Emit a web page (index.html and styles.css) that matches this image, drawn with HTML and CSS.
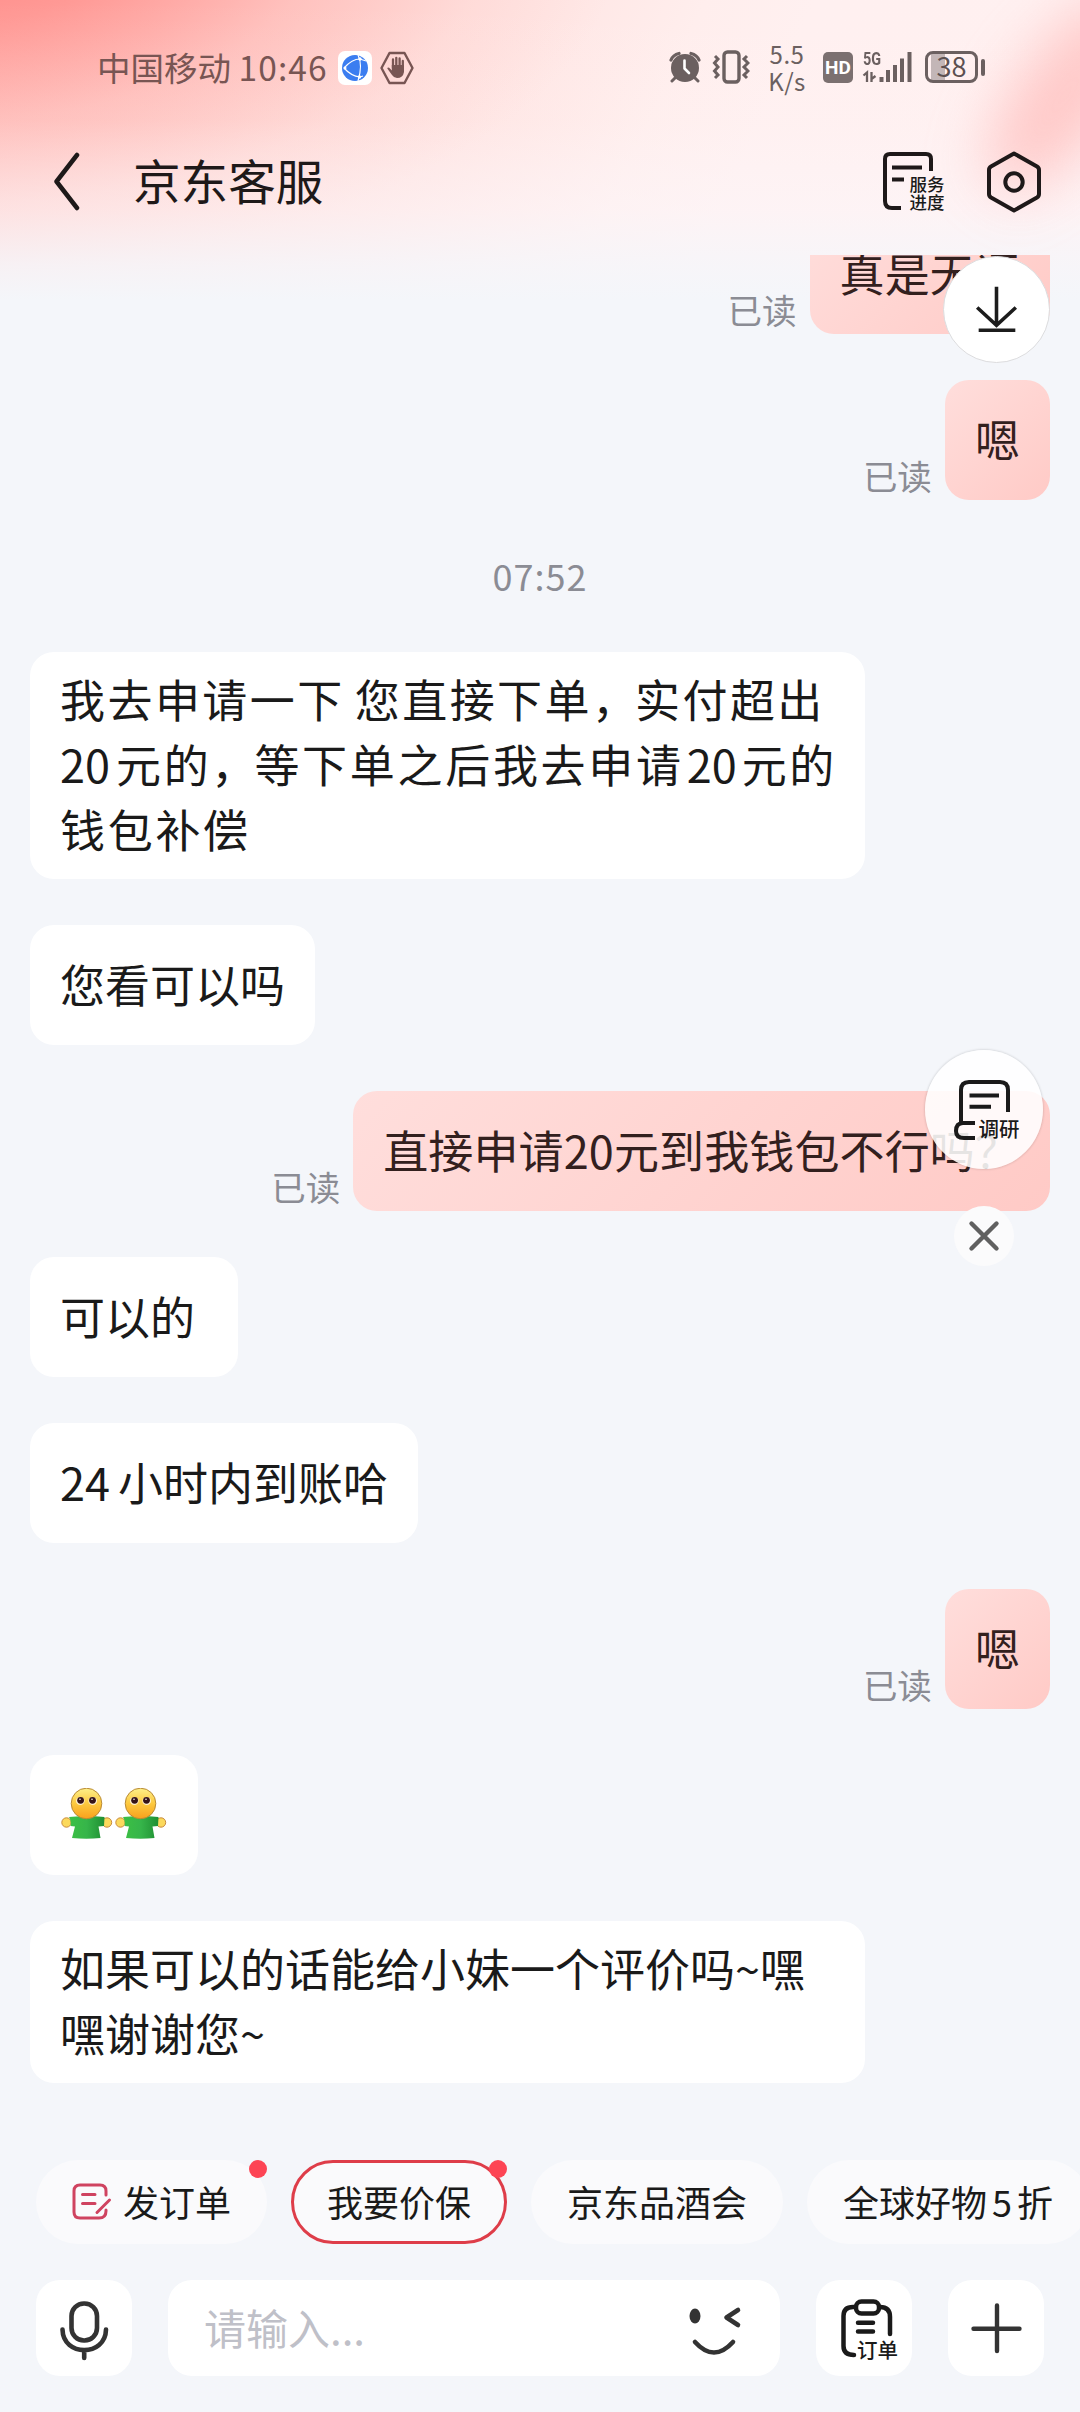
FILE: index.html
```html
<!DOCTYPE html>
<html lang="zh-CN">
<head>
<meta charset="utf-8">
<title>京东客服</title>
<link rel="stylesheet" href="styles.css">
</head>
<body>
<svg class="defs" width="0" height="0">
  <defs>
    <linearGradient id="face" x1="0" y1="0" x2="0" y2="1"><stop offset="0" stop-color="#fdf08a"/><stop offset=".5" stop-color="#fdc93f"/><stop offset="1" stop-color="#f8a01c"/></linearGradient>
    <linearGradient id="shirt" x1="0" y1="0" x2="1" y2="0"><stop offset="0" stop-color="#3cc044"/><stop offset=".5" stop-color="#36b54a"/><stop offset="1" stop-color="#1f8f33"/></linearGradient>
    <symbol id="hug" viewBox="0 0 54 54">
      <circle cx="5.500" cy="34.500" r="4.700" fill="#fbd95c" stroke="#c98a3c"/>
      <circle cx="46" cy="34.500" r="4.700" fill="#fbd95c" stroke="#c98a3c"/>
      <path d="M8 29 L22 28 H31 L43.500 29 L43 38 L37.500 38.500 L39.500 50 Q25.500 51.500 11 50 L14 38.500 L9.500 38 Q10.500 33 8 29 Z" fill="url(#shirt)"/>
      <circle cx="25.500" cy="15.500" r="15.300" fill="url(#face)" stroke="#b98a35"/>
      <ellipse cx="19.300" cy="13" rx="4.300" ry="4" fill="#fff1d0"/><ellipse cx="31.700" cy="13" rx="4.300" ry="4" fill="#fff1d0"/>
      <circle cx="19.600" cy="12.300" r="3.400" fill="#361418"/><circle cx="31.500" cy="12.300" r="3.400" fill="#361418"/>
      <circle cx="19" cy="11.200" r=".8" fill="#fff"/><circle cx="31" cy="11.200" r=".8" fill="#fff"/>
    </symbol>
  </defs>
</svg>
<div class="screen">
  <header class="header">
    <div class="status">
      <div class="status-left">
        <span class="carrier">中国移动 <span class="clock">10:46</span></span>
        <svg class="browser" width="34" height="34" viewBox="0 0 34 34"><rect width="34" height="34" rx="7" fill="#fff"/><circle cx="17" cy="17" r="13" fill="#3b7df0"/><g fill="none" stroke="#fff" stroke-width="1.200"><path d="M6 17 Q14 8 22 8 L28 10 M6 17 Q13 25 22 26 L25 25 M20 4 Q25 14 20 30"/></g><circle cx="7" cy="17" r="1.500" fill="#fff"/><circle cx="22" cy="8" r="1.700" fill="#fff"/><circle cx="21.500" cy="26" r="1.700" fill="#fff"/></svg>
        <svg width="34" height="34" viewBox="0 0 34 34"><path d="M9.500 2 H24.500 L32.500 17 L24.500 32 H9.500 L1.500 17 Z" fill="none" stroke="#785553" stroke-width="2.400" stroke-linejoin="round"/><path d="M13 17 V8.500 M16.300 16 V6.800 M19.600 16 V7.500 M22.800 17 V10" stroke="#785553" stroke-width="2.300" stroke-linecap="round"/><path d="M11.800 14 H24 V21 Q23 27 17 27 Q14 27 12 24 L7.300 17.500 Q7.500 16 9.200 16.800 L11.800 19.500 Z" fill="#785553"/></svg>
      </div>
      <div class="status-right">
        <svg width="32" height="32" viewBox="0 0 32 32"><g fill="none" stroke="#6b6060" stroke-linecap="round"><path d="M2 9 Q4 4 10 2.500 M30 9 Q28 4 22 2.500" stroke-width="3.200"/><path d="M6 27 L3 30 M26 27 L29 30" stroke-width="3"/></g><circle cx="16" cy="17" r="14" fill="#6b6060"/><path d="M15.500 9.500 V17.500 L20 22" fill="none" stroke="#fff" stroke-width="2.600" stroke-linecap="round" stroke-linejoin="round"/></svg>
        <svg class="vibrate" width="38" height="34" viewBox="0 0 38 34"><rect x="12" y="2" width="15" height="30" rx="3.500" fill="none" stroke="#6b6060" stroke-width="3.400"/><path d="M3 6 L6 9 L2.500 13 L6 17 L2.500 21 L6 25 L3 28 M35 6 L32 9 L36 13 L32 17 L36 21 L32 25 L35 28" fill="none" stroke="#6b6060" stroke-width="3"/></svg>
        <div class="speed"><span>5.5</span><span>K/s</span></div>
        <div class="hd">HD</div>
        <div class="signal"><span class="net">5G</span>
          <svg width="52" height="32" viewBox="0 0 52 32"><path d="M1.500 24.500 L5 21.500 V31 M9.500 21 V31 M9.500 28 L13.500 25" fill="none" stroke="#6b6060" stroke-width="2.300"/><path d="M19.500 26 V31 M26 19 V31 M33 14 V31 M40 7.500 V31 M47.500 1 V31" fill="none" stroke="#6b6060" stroke-width="4"/></svg>
        </div>
        <div class="battery"><span>38</span></div>
      </div>
    </div>
    <div class="titlebar">
      <svg class="back" width="32" height="60" viewBox="0 0 32 60"><path d="M26 3 L5.500 29.500 L26 56" fill="none" stroke="#1e1919" stroke-width="4.500" stroke-linecap="round" stroke-linejoin="round"/></svg>
      <h1>京东客服</h1>
      <div class="progress">
        <svg width="64" height="64" viewBox="0 0 64 64"><path d="M50 21 V9 Q50 4 45 4 H9 Q4 4 4 9 V51 Q4 58 11 58 H20" fill="none" stroke="#1e1919" stroke-width="4"/><path d="M11 17.500 H41 M11 29.500 H23" stroke="#1e1919" stroke-width="4"/></svg>
        <span>服务<br>进度</span>
      </div>
      <svg width="56" height="64" viewBox="0 0 56 64"><path d="M28 3.500 L51 16.500 Q53 17.700 53 20 V44 Q53 46.300 51 47.500 L28 60.500 L5 47.500 Q3 46.300 3 44 V20 Q3 17.700 5 16.500 Z" fill="none" stroke="#1e1919" stroke-width="4" stroke-linejoin="round"/><circle cx="28" cy="32" r="8.700" fill="none" stroke="#1e1919" stroke-width="4"/></svg>
    </div>
  </header>

  <main class="chat">
    <div class="row mine first"><span class="read">已读</span><div class="bubble">真是无语</div></div>
    <div class="row mine"><span class="read">已读</span><div class="bubble">嗯</div></div>
    <time class="time">07:52</time>
    <div class="row"><div class="bubble long"><span class="wide"><span class="tight">我去申请一下 您直接下单<span class="comma">，</span>实付超出</span><br><span class="num">20</span>元的<span class="comma">，</span>等下单之后我去申请<span class="num mid">20</span>元的<br>钱包补偿</span></div></div>
    <div class="row"><div class="bubble">您看可以吗</div></div>
    <div class="row mine"><span class="read">已读</span><div class="bubble">直接申请20元到我钱包不行吗？</div></div>
    <div class="row"><div class="bubble short">可以的</div></div>
    <div class="row"><div class="bubble"><span class="num">24</span>小时内到账哈</div></div>
    <div class="row mine"><span class="read">已读</span><div class="bubble">嗯</div></div>
    <div class="row"><div class="bubble emoji"><svg width="54" height="54"><use href="#hug"/></svg><svg width="54" height="54"><use href="#hug"/></svg></div></div>
    <div class="row"><div class="bubble long">如果可以的话能给小妹一个评价吗~嘿<br>嘿谢谢您~</div></div>
  </main>

  <footer class="footer">
    <nav class="chips">
      <div class="chip"><svg width="40" height="40" viewBox="0 0 40 40"><path d="M34 13 V9 Q34 3 28 3 H8 Q2 3 2 9 V30 Q2 36 8 36 H27 Q34 36 34 29 V28" fill="none" stroke="#cf4360" stroke-width="3" stroke-linecap="round"/><path d="M10.500 12.500 H23 M10.500 21.500 H23 M25 30.500 L37.500 18" stroke="#cf4360" stroke-width="3" stroke-linecap="round"/></svg><span>发订单</span><i class="dot"></i></div>
      <div class="chip active"><span>我要价保</span><i class="dot"></i></div>
      <div class="chip"><span>京东品酒会</span></div>
      <div class="chip"><span>全球好物<span class="num">5</span>折</span></div>
    </nav>
    <div class="inputbar">
      <div class="tool"><svg width="96" height="96" viewBox="0 0 96 96"><g fill="none" stroke="#333" stroke-width="4.600" stroke-linecap="round"><rect x="35.500" y="23.500" width="25.500" height="37" rx="12.500"/><path d="M26.500 49.500 C27 77 69.500 77 70 49.500 M48.200 70 V78"/></g></svg></div>
      <div class="input"><span>请输入...</span>
        <svg width="60" height="60" viewBox="0 0 60 60"><ellipse cx="11" cy="18" rx="5.500" ry="7.500" fill="#333"/><path d="M54 12 L42.500 19.500 L54 27 M11 44 Q30 65 49 44" fill="none" stroke="#333" stroke-width="4.600" stroke-linecap="round" stroke-linejoin="round"/></svg>
      </div>
      <div class="tool"><svg width="96" height="96" viewBox="0 0 96 96"><g fill="none" stroke="#1a1a1a" stroke-width="4.500" stroke-linecap="round"><rect x="40" y="21.500" width="23" height="12" rx="5.500"/><path d="M39 27 H37 Q27.500 27 27.500 36 V66 Q27.500 75 38 75 M64 27 Q74 27 74 37 V54 M42 42.700 H57 M42 51.500 H57"/></g></svg><span>订单</span></div>
      <div class="tool"><svg width="96" height="96" viewBox="0 0 96 96"><path d="M25.500 48.700 H71.500 M49 25.500 V71" stroke="#333" stroke-width="4.400" stroke-linecap="round"/></svg></div>
    </div>
  </footer>

  <div class="to-bottom"><svg width="105" height="105" viewBox="0 0 106 106"><path d="M53 30 V69 M33.500 51 L53 69 L72.500 51 M35 74 H72" fill="none" stroke="#1c1c1c" stroke-width="3.600"/></svg></div>
  <div class="survey"><svg width="118" height="119" viewBox="0 0 118 119"><path d="M83 62 V40 Q83 32 75 32 H44 Q36 32 36 40 V73 M50 73 H38 Q31 73 31 81 Q31 88 39 88 H50 M44.500 45.500 H74 M44.500 56.700 H66" fill="none" stroke="#1a1a1a" stroke-width="4"/></svg><span>调研</span></div>
  <div class="close"><svg width="60" height="60" viewBox="0 0 60 60"><path d="M17.500 17.500 L42.500 42.500 M42.500 17.500 L17.500 42.500" stroke="#606060" stroke-width="4.400" stroke-linecap="round"/></svg></div>
</div>
</body>
</html>
```

FILE: styles.css
```css
* { box-sizing: border-box; }
body { margin: 0; font-family: "Noto Sans CJK SC", "Noto Sans", sans-serif; color: #1a1a1a; }
.defs { position: absolute; }
svg { display: block; flex: none; }

.screen {
  position: relative;
  z-index: 0;
  width: 1080px;
  height: 2412px;
  overflow: hidden;
  display: flex;
  flex-direction: column;
  background:
    linear-gradient(180deg, rgba(244,246,250,0) 0, rgba(253,246,248,.1) 120px, rgba(252,246,249,.55) 210px, rgba(246,246,250,.88) 265px, #f4f6fa 300px),
    radial-gradient(ellipse 680px 330px at -60px -60px, #ff8784 0, rgba(255,145,141,.85) 26%, rgba(255,175,171,.55) 55%, rgba(255,200,196,.25) 80%, rgba(255,205,200,0) 100%),
    linear-gradient(115deg, #ffc3bf 0, #ffd9d6 280px, #ffeeed 640px, #fff0f0 740px, #fff1f1 100%);
}
/* soft pink streak in the top right corner */
.screen::before { content: ""; position: absolute; z-index: -1; left: 1020px; top: -20px; width: 90px; height: 230px; border-radius: 50%; background: #ffaeac; opacity: .62; transform: rotate(36deg); filter: blur(30px); }

.header { flex: none; height: 255px; }
.status { display: flex; justify-content: space-between; height: 108px; padding: 28px 95px 0 97px; }
.status-left { display: flex; align-items: center; gap: 8px; height: 80px; }
.carrier { margin-top: -3px; font-size: 33.500px; line-height: 77px; color: #785553; white-space: pre; }
.clock { letter-spacing: 1.100px; }
.browser { margin-left: 2px; }
.status-right { display: flex; align-items: center; height: 78px; color: #6b6060; }
.vibrate { margin-left: 11px; }
.speed { display: flex; flex-direction: column; align-items: center; width: 40px; margin: -1px 0 0 17px; font: 24px/27px "Noto Sans CJK SC", sans-serif; letter-spacing: .5px; }
.hd { display: grid; place-items: center; width: 30px; height: 31px; margin-left: 16px; border-radius: 5px; background: #7b7070; color: #fff; font: 700 19px/31px "Roboto", sans-serif; }
.signal { position: relative; margin-left: 9px; }
.net { position: absolute; left: 1px; top: -2px; font: 700 18px/19px "Roboto", sans-serif; transform: scaleX(.8); transform-origin: left; }
.battery { position: relative; display: grid; place-items: center; width: 53px; height: 32px; margin: 0 7px 0 11px; border: 3px solid #6b6060; border-radius: 8px; background: linear-gradient(90deg, transparent 3px, #c3b6b7 3px, #c3b6b7 17px, transparent 17px); font: 27px/26px "Noto Sans CJK SC", sans-serif; color: #5c5051; }
.battery span { margin-top: -2px; }
.battery::after { content: ""; position: absolute; right: -10px; top: 5px; width: 4px; height: 17px; border-radius: 2px; background: #6b6060; }

.titlebar { display: flex; align-items: center; height: 148px; padding: 0 38px 0 51px; }
.back { margin-right: 50px; }
h1 { flex: 1; margin: -5px 0 0; font-size: 47.600px; font-weight: 400; line-height: 72px; color: #1e1919; }
.progress { position: relative; margin-right: 41px; }
.progress span { position: absolute; left: 28.500px; top: 25px; font-size: 17.500px; font-weight: 500; line-height: 18px; white-space: nowrap; }

.chat { flex: none; height: 1860px; overflow: hidden; display: flex; flex-direction: column; gap: 46px; padding: 0 30px; }
.row { display: flex; flex: none; align-items: flex-end; }
.row.first { margin-top: -41px; }
.mine { justify-content: flex-end; }
.bubble { display: flex; align-items: center; min-height: 120px; padding: 14px 30px 18px; border-radius: 24px; background: #fff; font-size: 45px; line-height: 65px; white-space: nowrap; }
.mine .bubble { background: linear-gradient(135deg, #ffdedc, #ffcac6); color: #33201e; letter-spacing: .12px; }
.long { width: 835px; }
.short { width: 208px; }
.wide { letter-spacing: 2.700px; }
.tight { letter-spacing: 2.450px; word-spacing: -2.500px; }
.num { margin-right: 8px; }
.wide .num { margin-right: 6px; letter-spacing: 0; }
.wide .mid { margin-left: 3px; margin-right: 5px; }
.comma { letter-spacing: -2px; }
.read { margin: 0 13px 2px 0; font-size: 34.500px; line-height: 46px; color: #8b8c94; }
.time { display: block; height: 60px; text-align: center; font-size: 36px; line-height: 58px; letter-spacing: 1px; color: #8b8c94; }
.emoji { padding: 17px 29px 17px 31px; }

.footer { flex: none; padding-top: 45px; }
.chips { display: flex; gap: 24px; padding-left: 36px; }
.chip { position: relative; flex: none; display: flex; align-items: center; height: 84px; padding: 0 36px; border-radius: 42px; background: #fafafc; font-size: 36px; line-height: 82px; }
.chip > span { height: 84px; }
.chip svg { margin-right: 11px; }
.chip .num { margin: 0 5px; }
.active::before { content: ""; position: absolute; inset: 0; border: 3px solid #de3d49; border-radius: 42px; }
.dot { position: absolute; right: 0; top: 0; width: 18px; height: 18px; border-radius: 50%; background: #fd4454; }
.inputbar { display: flex; gap: 36px; margin-top: 36px; padding: 0 36px; }
.tool { position: relative; flex: none; width: 96px; height: 96px; border-radius: 24px; background: #fff; }
.tool span { position: absolute; left: 41px; top: 55px; font-size: 20.500px; font-weight: 500; line-height: 28px; white-space: nowrap; }
.input { flex: 1; display: flex; align-items: center; justify-content: space-between; height: 96px; padding: 0 36px; border-radius: 24px; background: #fff; color: #bfc0c8; font-size: 42px; line-height: 94px; }
.input span { height: 96px; }

.to-bottom { position: absolute; left: 943px; top: 256px; width: 107px; height: 107px; border-radius: 50%; background: #fff; border: 1px solid #dcdcde; }
.survey { position: absolute; left: 925px; top: 1050px; width: 118px; height: 119px; border-radius: 50%; background: rgba(255,255,255,.88); box-shadow: 0 0 2px 1px rgba(0,0,0,.1); }
.survey span { position: absolute; left: 53.500px; top: 64px; font-size: 20.500px; font-weight: 500; line-height: 28px; white-space: nowrap; }
.close { position: absolute; left: 954px; top: 1206px; width: 60px; height: 60px; border-radius: 50%; background: #fbfbfc; }
```
